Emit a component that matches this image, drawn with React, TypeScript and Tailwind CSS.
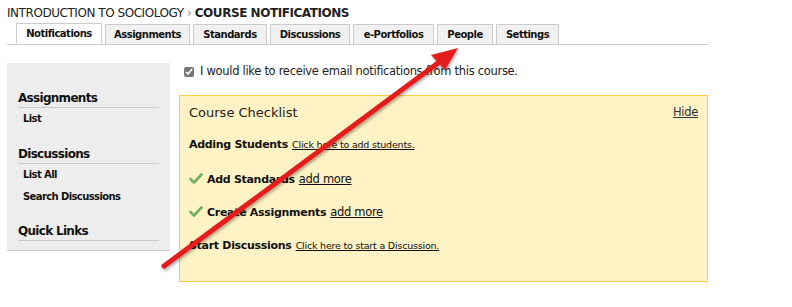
import React from 'react';

const tabs: [string, number][] = [
  ['Notifications', 86],
  ['Assignments', 85],
  ['Standards', 74],
  ['Discussions', 80],
  ['e-Portfolios', 81],
  ['People', 56],
  ['Settings', 63],
];

function Check() {
  return (
    <svg width="14" height="12" viewBox="0 0 14 12" className="mr-[4px] shrink-0 -mt-[3px]">
      <path d="M1.5 6 L5 9.5 L12.5 1.5" fill="none" stroke="#72b062" strokeWidth="2.6" strokeLinecap="round" strokeLinejoin="round" />
    </svg>
  );
}

export default function App() {
  return (
    <div className="relative w-[792px] h-[307px] bg-white overflow-hidden text-[#111] font-['DejaVu_Sans',_Verdana,_sans-serif]">
      {/* Breadcrumb */}
      <div className="pl-[7px] pt-[5px] text-[12px] leading-[16px] tracking-[-0.45px] text-[#222]">
        INTRODUCTION TO SOCIOLOGY <span className="text-[#888]">›</span> <b>COURSE NOTIFICATIONS</b>
      </div>

      {/* Tabs */}
      <div className="ml-[7px] mt-[3px] w-[702px] flex items-end gap-[3px] pl-[9px] border-b border-[#ccc] h-[21px]">
        {tabs.map(([t, w], i) => (
          <div
            key={t}
            style={{ width: w }}
            className={
              'flex items-center justify-center text-[10px] tracking-[-0.5px] font-bold border border-[#ccc] ' +
              (i === 0 ? 'h-[21px] bg-white border-b-white' : 'h-[20px] bg-[#f1f1f1] border-b-0')
            }
          >
            {t}
          </div>
        ))}
      </div>

      <div className="flex mt-[18px]">
        {/* Sidebar */}
        <div className="ml-[7px] w-[163px] h-[188px] bg-[#ededed] border-b border-[#ccc] px-[11px] pt-[28px]">
          <div className="text-[12px] tracking-[-0.7px] font-bold leading-[15px] border-b border-[#ccc] pb-[1px]">Assignments</div>
          <div className="text-[10px] tracking-[-0.6px] leading-[12px] font-bold pl-[5px] mt-[5px]">List</div>
          <div className="text-[12px] tracking-[-0.7px] font-bold leading-[15px] border-b border-[#ccc] pb-[1px] mt-[22px]">Discussions</div>
          <div className="text-[10px] tracking-[-0.6px] leading-[12px] font-bold pl-[5px] mt-[5px]">List All</div>
          <div className="text-[10px] tracking-[-0.6px] leading-[12px] font-bold pl-[5px] mt-[10px]">Search Discussions</div>
          <div className="text-[12px] tracking-[-0.7px] font-bold leading-[15px] border-b border-[#ccc] pb-[1px] mt-[21px]">Quick Links</div>
        </div>

        {/* Main */}
        <div className="ml-[9px] w-[529px]">
          <label className="flex items-center ml-[5px] mt-[1px] h-[16px] text-[11.5px] tracking-[-0.3px] text-[#222]">
            <input type="checkbox" defaultChecked className="w-[10px] h-[10px] mr-[6px] accent-[#777]" />
            I would like to receive email notifications from this course.
          </label>

          <div className="mt-[15px] h-[187px] bg-[#fff2c4] border border-[#f8cd45] px-[9px] pt-[8px]">
            <div className="flex justify-between items-center h-[18px]">
              <span className="text-[13px] text-[#222]">Course Checklist</span>
              <span className="text-[11.5px] tracking-[-0.3px] underline text-[#333]">Hide</span>
            </div>
            <div className="mt-[16px] h-[14px] flex items-center">
              <b className="text-[11px] tracking-[-0.3px]">Adding Students</b>
              <span className="ml-[4px] text-[9.5px] tracking-[-0.2px] underline">Click here to add students.</span>
            </div>
            <div className="mt-[21px] h-[14px] flex items-center">
              <Check />
              <b className="text-[11px] tracking-[-0.3px]">Add Standards</b>
              <span className="ml-[4px] text-[11.5px] tracking-[-0.3px] underline">add more</span>
            </div>
            <div className="mt-[19px] h-[14px] flex items-center">
              <Check />
              <b className="text-[11px] tracking-[-0.3px]">Create Assignments</b>
              <span className="ml-[4px] text-[11.5px] tracking-[-0.3px] underline">add more</span>
            </div>
            <div className="mt-[19px] h-[14px] flex items-center">
              <b className="text-[11px] tracking-[-0.3px]">Start Discussions</b>
              <span className="ml-[4px] text-[9.5px] tracking-[-0.2px] underline">Click here to start a Discussion.</span>
            </div>
          </div>
        </div>
      </div>

      {/* Annotation arrow */}
      <svg className="absolute left-0 top-0 pointer-events-none" width="792" height="307">
        <defs>
          <filter id="sh" x="-10%" y="-10%" width="120%" height="120%">
            <feDropShadow dx="1" dy="2" stdDeviation="1.5" floodColor="#000" floodOpacity="0.35" />
          </filter>
        </defs>
        <g filter="url(#sh)">
          <line x1="164" y1="266" x2="442" y2="60" stroke="#e31b1b" strokeWidth="5" strokeLinecap="round" />
          <polygon points="458,48 431,55 445,70" fill="#e31b1b" />
        </g>
      </svg>
    </div>
  );
}
